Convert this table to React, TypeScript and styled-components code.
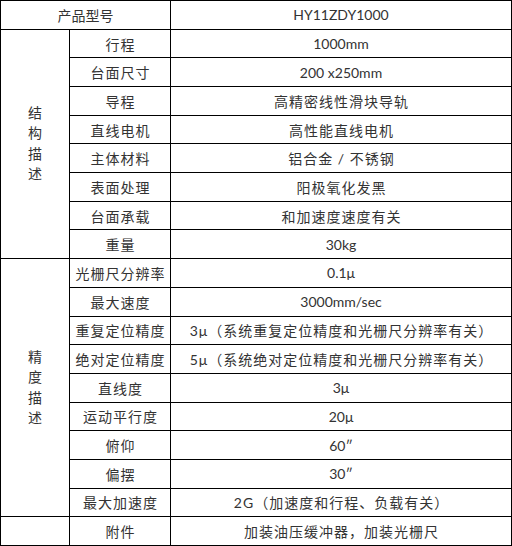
import React from "react";
import styled, { createGlobalStyle } from "styled-components";

const Global = createGlobalStyle`
  html, body { margin: 0; padding: 0; background: #fff; }
  body { font-family: "Lato", "Noto Sans CJK SC", sans-serif; }
`;

const Sheet = styled.div`
  box-sizing: border-box;
  width: 512px;
  height: 546px;
  display: grid;
  grid-template-columns: 68px 100px 1fr;
  grid-template-rows: repeat(19, 1fr);
  gap: 1px;
  padding: 1px;
  background: #000;
`;

const Cell = styled.div<{ $span?: number; $rows?: number; $spaced?: boolean }>`
  grid-column: span ${(p) => p.$span ?? 1};
  grid-row: span ${(p) => p.$rows ?? 1};
  background: #fff;
  display: flex;
  align-items: center;
  justify-content: center;
  font-size: 14px;
  color: #333;
  white-space: nowrap;
  letter-spacing: ${(p) => (p.$spaced ? "1px" : "0")};
  text-indent: ${(p) => (p.$spaced ? "1px" : "0")};
`;

const VerticalStack = styled.div`
  display: flex;
  flex-direction: column;
  align-items: center;
  font-size: 14px;
  line-height: 20.5px;
  color: #333;
`;

type Row = [string, string, boolean?];

const structure: Row[] = [
  ["行程", "1000mm"],
  ["台面尺寸", "200 x250mm"],
  ["导程", "高精密线性滑块导轨", true],
  ["直线电机", "高性能直线电机", true],
  ["主体材料", "铝合金 / 不锈钢", true],
  ["表面处理", "阳极氧化发黑", true],
  ["台面承载", "和加速度速度有关", true],
  ["重量", "30kg"],
];

const precision: Row[] = [
  ["光栅尺分辨率", "0.1μ"],
  ["最大速度", "3000mm/sec"],
  ["重复定位精度", "3μ（系统重复定位精度和光栅尺分辨率有关）", true],
  ["绝对定位精度", "5μ（系统绝对定位精度和光栅尺分辨率有关）", true],
  ["直线度", "3μ"],
  ["运动平行度", "20μ"],
  ["俯仰", "60″"],
  ["偏摆", "30″"],
  ["最大加速度", "2G（加速度和行程、负载有关）", true],
];

const Vertical = ({ text }: { text: string }) => (
  <VerticalStack>
    {text.split("").map((c, i) => (
      <span key={i}>{c}</span>
    ))}
  </VerticalStack>
);

const Group = ({ title, rows }: { title: string; rows: Row[] }) => (
  <>
    <Cell $rows={rows.length}>
      <Vertical text={title} />
    </Cell>
    {rows.map(([label, value, spaced], i) => (
      <React.Fragment key={i}>
        <Cell $spaced>{label}</Cell>
        <Cell $spaced={!!spaced}>{value}</Cell>
      </React.Fragment>
    ))}
  </>
);

export default function App() {
  return (
    <>
      <Global />
      <Sheet>
        <Cell $span={2}>产品型号</Cell>
        <Cell>HY11ZDY1000</Cell>
        <Group title="结构描述" rows={structure} />
        <Group title="精度描述" rows={precision} />
        <Cell />
        <Cell $spaced>附件</Cell>
        <Cell $spaced>加装油压缓冲器，加装光栅尺</Cell>
      </Sheet>
    </>
  );
}
